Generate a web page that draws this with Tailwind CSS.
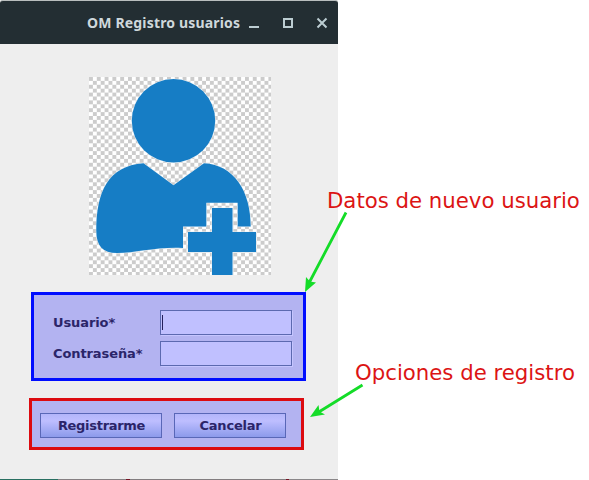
<!DOCTYPE html>
<html lang="es">
<head>
<meta charset="utf-8">
<title>OM Registro usuarios</title>
<script src="https://cdn.jsdelivr.net/npm/@tailwindcss/browser@4"></script>
</head>
<body class="relative h-[480px] w-[589px] overflow-hidden bg-white font-['DejaVu_Sans',sans-serif]">
<main class="flex h-[480px] w-[338px] flex-col bg-[#eeeeee]">
  <header class="flex h-11 shrink-0 items-center rounded-t-[3px] border-t border-[#b9bebe] bg-[#232e33] pl-[87px]">
    <h1 class="w-[160px] whitespace-nowrap font-['Noto_Sans',sans-serif] text-[14px] leading-5 font-bold tracking-[0.17px] text-[#cfd8dc]">OM Registro usuarios</h1>
    <svg class="h-5 w-[88px]" viewBox="247 13 88 20" fill="none" stroke="#bccdd2" stroke-width="2">
      <path d="M249 27h10"/><path d="M284 19h8v8h-8z"/><path d="M317.5 18.500l9 9M326.500 18.500l-9 9"/>
    </svg>
  </header>
  <svg class="mt-[33px] ml-[89px] h-[198px] w-[182px] shrink-0" viewBox="89 77 182 198">
    <defs><pattern id="check" x="89" y="77" width="7.8" height="7.8" patternUnits="userSpaceOnUse"><path fill="#fff" d="M0 0h8v8H0z"/><path fill="#cccccc" d="M0 0h3.900v3.900H0zM3.900 3.900h3.900v3.900H3.900z"/></pattern></defs>
    <path fill="url(#check)" d="M89 77h182v198H89z"/>
    <g fill="#167dc5" stroke="#e9f3f9" stroke-width="1" paint-order="stroke">
      <circle cx="173.500" cy="120.800" r="41.700"/>
      <path d="M143.500 163.300L173.500 185.300L204 163.300C234 165 250.700 191 250.700 226.500H237.700V202.700H206.300V226.500H183V248C157 246.500 136 253 117 253C103 253 96.300 246 96.300 231C96.300 192 108 166 143.500 163.300Z"/>
      <path d="M212 208h20.500v24H256v20h-23.500v24H212v-24h-24v-20h24z"/>
    </g>
  </svg>
  <form class="mt-[17px] ml-[31px] flex h-[89px] w-[275px] shrink-0 flex-col gap-[6px] border-3 border-[#000dff] bg-[#b3b3f1] pt-[15px] pl-[19px] text-[13px] font-bold tracking-[-0.1px] text-[#2b2569]">
    <div class="flex h-[25px] items-center"><label class="w-[107px]">Usuario*</label><div class="h-[25px] w-[132px] border border-[#5c69b0] bg-[#c0c0ff] pt-1 pl-px shadow-[1px_1px_0_#c5c5ff]"><div class="h-[15px] w-px bg-[#24205b]"></div></div></div>
    <div class="flex h-[25px] items-center"><label class="w-[107px]">Contraseña*</label><div class="h-[25px] w-[132px] border border-[#5c69b0] bg-[#c0c0ff] shadow-[1px_1px_0_#c5c5ff]"></div></div>
  </form>
  <section class="mt-[17px] ml-[29px] flex h-[52px] w-[275px] shrink-0 gap-3 border-3 border-[#dc0b10] bg-[#b3b3f1] pt-3 pl-2 text-[13px] font-bold text-[#2b2569]">
    <button class="h-[25px] w-[122px] border border-[#5967b7] bg-linear-to-b from-[#b3b5fa] via-[#bebeff] via-30% to-[#8c9aeb] pl-px tracking-[-0.3px]">Registrarme</button>
    <button class="h-[25px] w-[112px] border border-[#5967b7] bg-linear-to-b from-[#b3b5fa] via-[#bebeff] via-30% to-[#8c9aeb] pl-px tracking-[-0.2px]">Cancelar</button>
  </section>
  <div class="mt-auto flex h-px shrink-0"><i class="w-[58px] bg-[#286f61]"></i><i class="w-[68px] bg-[#857f82]"></i><i class="w-1 bg-[#751323]"></i><i class="w-[156px] bg-[#827d7f]"></i><i class="w-[3px] bg-[#751323]"></i><i class="grow bg-[#8a8789]"></i></div>
</main>
<p class="absolute top-[188px] left-[327px] whitespace-nowrap text-[21.250px] leading-[26px] text-[#dc1414]">Datos de nuevo usuario</p>
<p class="absolute top-[360px] left-[355px] whitespace-nowrap text-[21.250px] leading-[26px] text-[#dc1414]">Opciones de registro</p>
<svg class="absolute inset-0 h-[480px] w-[589px]" viewBox="0 0 589 480" fill="#14dc28">
  <path d="M346 212.500L309 283M362.500 385L318 412.500" fill="none" stroke="#14dc28" stroke-width="2.800"/>
  <path d="M305 292L306 277L310 281.500L316 282.500Z"/>
  <path d="M310 417L318.500 405L319.500 411.500L325 414.500Z"/>
</svg>
</body>
</html>
